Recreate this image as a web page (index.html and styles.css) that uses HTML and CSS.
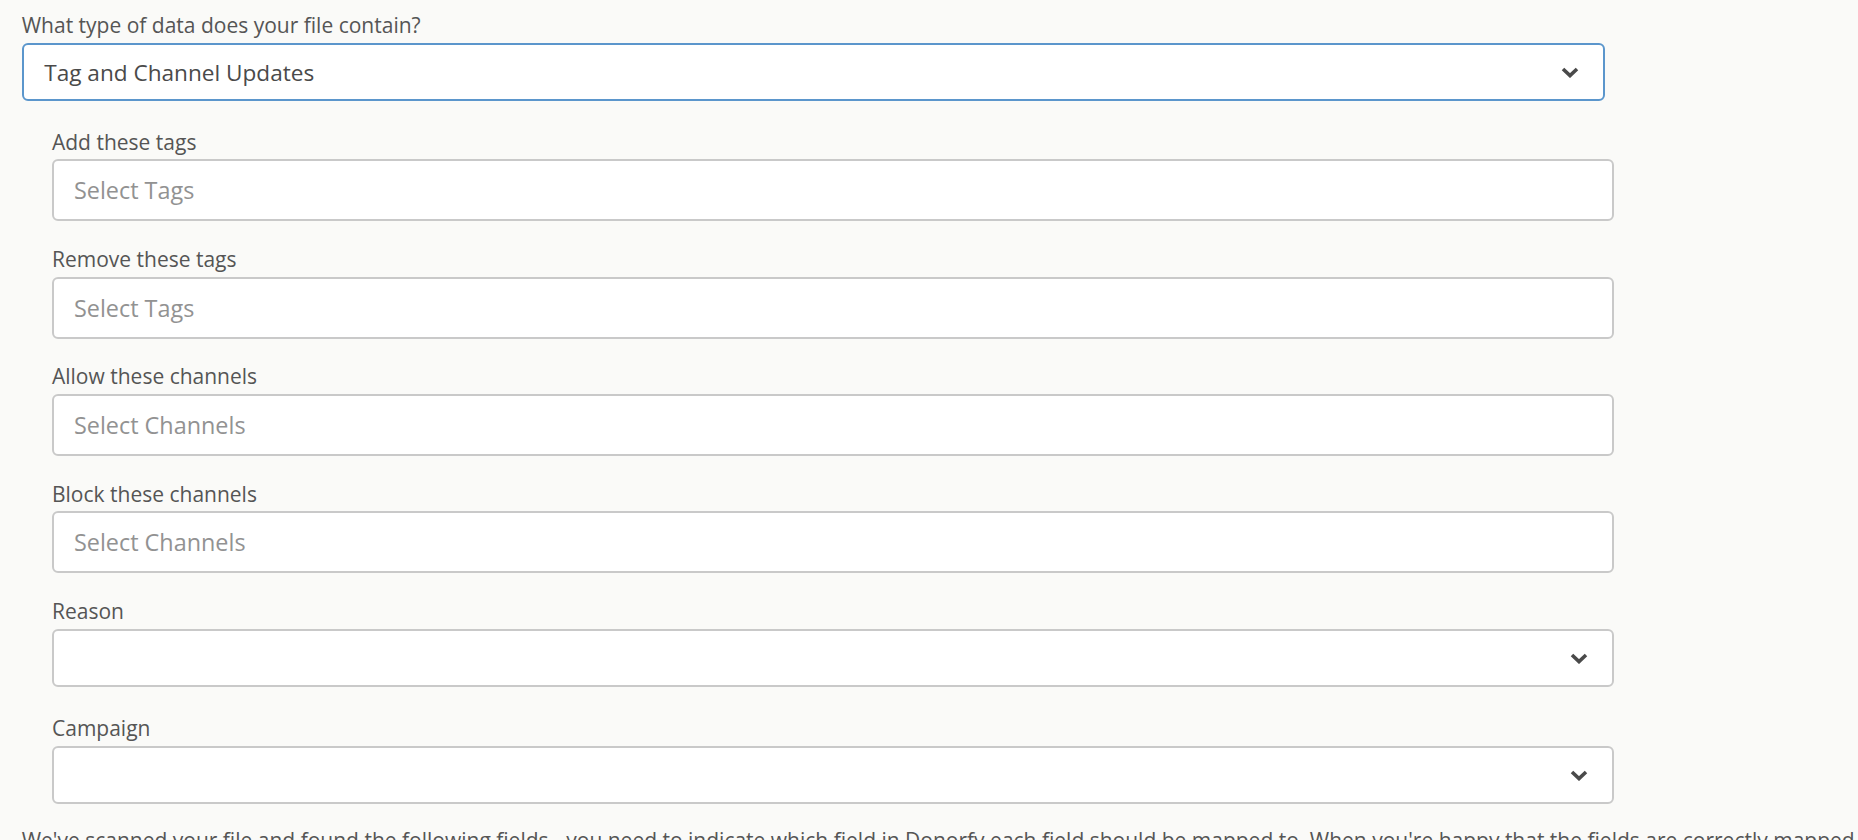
FILE: index.html
```html
<!DOCTYPE html>
<html lang="en">
<head>
<meta charset="utf-8">
<title>Import - Tag and Channel Updates</title>
<link rel="stylesheet" href="styles.css">
</head>
<body>
<div class="page">
  <label class="label">What type of data does your file contain?</label>
  <div class="select select-primary">
    <span class="select-value">Tag and Channel Updates</span>
    <svg class="chevron" viewBox="0 0 18 11" aria-hidden="true"><polyline points="2,2 9,8.6 16,2"/></svg>
  </div>

  <div class="fields">
    <div class="group">
      <label class="label">Add these tags</label>
      <div class="input"><span class="placeholder">Select Tags</span></div>
    </div>
    <div class="group">
      <label class="label">Remove these tags</label>
      <div class="input"><span class="placeholder">Select Tags</span></div>
    </div>
    <div class="group">
      <label class="label">Allow these channels</label>
      <div class="input"><span class="placeholder">Select Channels</span></div>
    </div>
    <div class="group">
      <label class="label">Block these channels</label>
      <div class="input"><span class="placeholder">Select Channels</span></div>
    </div>
    <div class="group group-select">
      <label class="label">Reason</label>
      <div class="select select-field">
        <span class="select-value"></span>
        <svg class="chevron" viewBox="0 0 18 11" aria-hidden="true"><polyline points="2,2 9,8.6 16,2"/></svg>
      </div>
    </div>
    <div class="group group-select">
      <label class="label">Campaign</label>
      <div class="select select-field">
        <span class="select-value"></span>
        <svg class="chevron" viewBox="0 0 18 11" aria-hidden="true"><polyline points="2,2 9,8.6 16,2"/></svg>
      </div>
    </div>
  </div>

  <p class="intro">We've scanned your file and found the following fields - you need to indicate which field in Donorfy each field should be mapped to. When you're happy that the fields are correctly mapped, click the Next button to continue.</p>
</div>
</body>
</html>
```
FILE: styles.css
```css
html, body {
  margin: 0;
  padding: 0;
  overflow: hidden;
}

body {
  background: #fafaf8;
  font-family: "Open Sans", "Noto Sans", sans-serif;
  color: #555555;
}

.page {
  padding: 11.2px 0 0 21.7px;
}

.label {
  display: block;
  font-size: 21px;
  line-height: 28px;
  color: #555555;
  margin-bottom: 3.5px;
}

.select {
  box-sizing: border-box;
  display: flex;
  align-items: center;
  justify-content: space-between;
  height: 58px;
  background: #ffffff;
  border: 2px solid #c9c9c9;
  border-radius: 6px;
}

.select-primary {
  width: 1583px;
  border-color: #5b96cc;
  padding: 0 24px 0 20.5px;
}

.select-field {
  width: 1562px;
  padding: 0 24px 0 20px;
}

.select-value {
  font-size: 22.6px;
  color: #4a4a4a;
  line-height: 30px;
  margin-top: 2px;
}

.chevron {
  width: 18px;
  height: 11px;
  margin-top: 2px;
  fill: none;
  stroke: #4a4a4a;
  stroke-width: 3.6;
  stroke-linejoin: miter;
  stroke-linecap: butt;
}

.fields {
  margin: 27.2px 0 0 30.3px;
}

.group {
  margin-bottom: 23.8px;
}

.group-select {
  margin-bottom: 27.5px;
}

.group:last-child {
  margin-bottom: 0;
}

.input {
  box-sizing: border-box;
  display: flex;
  align-items: center;
  width: 1562px;
  height: 62px;
  padding: 0 20px;
  background: #ffffff;
  border: 2px solid #c9c9c9;
  border-radius: 6px;
}

.placeholder {
  font-size: 23.4px;
  line-height: 30px;
  color: #929292;
}

.intro {
  margin: 22.9px 0 0 0;
  font-size: 21px;
  line-height: 28px;
  white-space: nowrap;
  color: #555555;
}
```
